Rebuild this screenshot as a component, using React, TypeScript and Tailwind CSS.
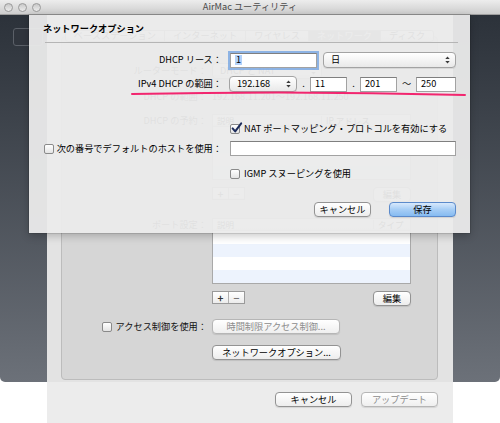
import React from "react";

function UpDown() {
  return (
    <svg width="5" height="8" viewBox="0 0 5 8" className="shrink-0">
      <path d="M2.5 0.4 L4.7 3.1 L0.3 3.1 Z" fill="#3a3a3a" />
      <path d="M2.5 7.6 L4.7 4.9 L0.3 4.9 Z" fill="#3a3a3a" />
    </svg>
  );
}

function Popup({ text, className = "" }: { text: string; className?: string }) {
  return (
    <div
      className={`flex h-[16px] shrink-0 items-center justify-between rounded-[4px] border border-[#a3a3a3] bg-gradient-to-b from-white to-[#e9e9e9] pl-[7px] pr-[5px] shadow-[0_1px_0_rgba(0,0,0,0.08)] ${className}`}
    >
      <span className="whitespace-nowrap text-[9.2px] leading-none text-black">{text}</span>
      <UpDown />
    </div>
  );
}

function Field({ children, className = "" }: { children?: React.ReactNode; className?: string }) {
  return (
    <div
      className={`flex h-[15px] shrink-0 items-center border border-[#a2a2a2] border-t-[#7f7f7f] bg-white pl-[4px] text-[9.2px] leading-none text-black ${className}`}
    >
      {children}
    </div>
  );
}

function Check({ checked = false }: { checked?: boolean }) {
  return (
    <div className="relative h-[10px] w-[10px] shrink-0 rounded-[2px] border border-[#8a8a8a] bg-gradient-to-b from-white to-[#e4e4e4]">
      {checked && (
        <svg className="absolute -top-[3px] left-[0px]" width="12" height="12" viewBox="0 0 12 12">
          <path d="M1.6 6.4 L4.2 9.4 L10.2 1.4" fill="none" stroke="#1c2b5a" strokeWidth="2" strokeLinecap="round" strokeLinejoin="round" />
        </svg>
      )}
    </div>
  );
}

function Btn({
  children,
  className = "",
  disabled = false,
  primary = false,
}: {
  children: React.ReactNode;
  className?: string;
  disabled?: boolean;
  primary?: boolean;
}) {
  const look = primary
    ? "border-[#5b8acb] bg-gradient-to-b from-[#d8e9fc] via-[#a6cdf5] to-[#86bbf1] text-black"
    : disabled
    ? "border-[#b6b6b6] bg-gradient-to-b from-white to-[#efefef] text-[#8c8c8c]"
    : "border-[#939393] bg-gradient-to-b from-white to-[#ededed] text-black";
  return (
    <div
      className={`flex h-[15px] shrink-0 items-center justify-center whitespace-nowrap rounded-[4px] border text-[9.2px] leading-none shadow-[0_1px_1px_rgba(0,0,0,0.1)] ${look} ${className}`}
    >
      {children}
    </div>
  );
}

function List({ c1, c2, split }: { c1: string; c2: string; split: string }) {
  const rows = ["bg-white", "bg-[#edf3fd]", "bg-white", "bg-[#edf3fd]"];
  return (
    <div className="ml-[5px] flex h-[66px] w-[199px] flex-col border border-[#a9a9a9] bg-white">
      <div className="flex h-[12px] items-center border-b border-[#c6c6c6] bg-gradient-to-b from-white to-[#ebebeb] text-[8.5px] leading-none text-black">
        <span className={`pl-[4px] ${split}`}>{c1}</span>
        <span className="border-l border-[#c6c6c6] pl-[4px]">{c2}</span>
      </div>
      {rows.map((r, i) => (
        <div key={i} className={`h-[13px] ${r}`} />
      ))}
    </div>
  );
}

function PlusMinus() {
  return (
    <div className="flex h-[13px] w-[33px] border border-[#9a9a9a] bg-gradient-to-b from-white to-[#ececec] text-[10px] font-bold leading-none text-[#333]">
      <div className="flex flex-1 items-center justify-center border-r border-[#b0b0b0]">+</div>
      <div className="flex flex-1 items-center justify-center text-[#777]">−</div>
    </div>
  );
}

export default function App() {
  return (
    <div className="relative h-[423px] w-[500px] overflow-hidden bg-white font-['Noto_Sans_CJK_JP','Noto_Sans',sans-serif] text-[#111]">
      {/* title bar */}
      <div className="grid h-[15px] grid-cols-[1fr_auto_1fr] items-center border-b border-[#9e9e9e] bg-gradient-to-b from-[#ededed] to-[#cdcdcd]">
        <div className="flex gap-[5px] pl-[4px]">
          {[0, 1, 2].map((i) => (
            <div key={i} className="h-[9px] w-[9px] rounded-full border border-[#9a9a9a] bg-gradient-to-b from-[#c9c9c9] to-[#ececec]" />
          ))}
        </div>
        <span className="text-[9.2px] leading-none text-[#4a4a4a]">AirMac ユーティリティ</span>
        <div />
      </div>

      <div className="flex h-[408px]">
        {/* left dark */}
        <div className="w-[47px] shrink-0">
          <div className="h-[367px] rounded-bl-[5px] bg-gradient-to-b from-[#2c323a] to-[#6c7179] pl-[13px] pt-[13px]">
            <div className="h-[18px] w-[30px] rounded-[3px] border border-[#5b6068] bg-[#30353d]" />
          </div>
        </div>

        {/* main window */}
        <div className="flex w-[406px] shrink-0 flex-col">
          <div className="h-[367px] bg-[#e3e3e3] pl-[14px] pr-[15px] pt-[21px]">
            <div className="flex h-[344px] flex-col rounded-[4px] border border-[#bcbcbc] bg-[#d6d6d6]">
              <div className="-mt-[7px] flex justify-center">
                <div className="flex h-[12px] rounded-[3px] border border-[#a0a0a0] bg-gradient-to-b from-white to-[#e4e4e4] text-[9.2px] leading-none">
                  <div className="flex items-center border-r border-[#a0a0a0] px-[8px]">ベースステーション</div>
                  <div className="flex items-center border-r border-[#a0a0a0] px-[8px]">インターネット</div>
                  <div className="flex items-center border-r border-[#a0a0a0] px-[8px]">ワイヤレス</div>
                  <div className="flex items-center border-r border-[#a0a0a0] bg-[#8a8a8a] px-[8px] text-white">ネットワーク</div>
                  <div className="flex items-center px-[8px]">ディスク</div>
                </div>
              </div>

              <div className="mt-[21px] flex h-[16px] items-center">
                <div className="w-[145px] text-right text-[9.2px] leading-none">ルーターモード：</div>
                <Popup text="DHCP と NAT" className="ml-[5px] w-[110px]" />
              </div>
              <div className="mt-[12px] flex h-[12px] items-center">
                <div className="w-[145px] text-right text-[9.2px] leading-none">DHCP の範囲：</div>
                <div className="ml-[5px] text-[9.2px] leading-none">192.168.11.201～192.168.11.250</div>
              </div>
              <div className="mt-[11px] flex">
                <div className="w-[145px] pt-[2px] text-right text-[9.2px] leading-none">DHCP の予約：</div>
                <List c1="説明" c2="IP アドレス" split="w-[108px]" />
              </div>
              <div className="ml-[150px] mt-[7px] flex w-[199px] justify-between">
                <PlusMinus />
                <Btn className="h-[13px] w-[38px]">編集</Btn>
              </div>
              <div className="mt-[16px] flex">
                <div className="w-[145px] pt-[2px] text-right text-[9.2px] leading-none">ポート設定：</div>
                <List c1="説明" c2="タイプ" split="w-[160px]" />
              </div>
              <div className="ml-[150px] mt-[7px] flex w-[199px] justify-between">
                <PlusMinus />
                <Btn className="h-[14px] w-[38px] text-[#555]">編集</Btn>
              </div>
              <div className="mt-[13px] flex h-[15px] items-center">
                <div className="flex w-[145px] items-center justify-end gap-[4px]">
                  <Check />
                  <span className="whitespace-nowrap text-[9.2px] leading-none">アクセス制御を使用：</span>
                </div>
                <Btn disabled className="ml-[5px] w-[128px]">時間制限アクセス制御...</Btn>
              </div>
              <div className="ml-[150px] mt-[11px] flex">
                <Btn className="w-[129px]">ネットワークオプション...</Btn>
              </div>
            </div>
          </div>
          <div className="flex h-[41px] justify-end gap-[9px] bg-[#ececec] pr-[15px] pt-[10px]">
            <Btn className="w-[77px]">キャンセル</Btn>
            <Btn disabled className="w-[77px]">アップデート</Btn>
          </div>
        </div>

        {/* right dark */}
        <div className="w-[47px] shrink-0">
          <div className="h-[367px] rounded-br-[5px] bg-gradient-to-b from-[#2c323a] to-[#6c7179]" />
        </div>
      </div>

      {/* sheet */}
      <div className="absolute left-[29px] top-[15px] flex h-[218px] w-[441px] flex-col bg-[#ebebeb]/[0.95] shadow-[0_0_0_1px_rgba(0,0,0,0.1),0_3px_8px_rgba(0,0,0,0.22)]">
        <div className="mt-[8px] flex h-[12px] items-center pl-[14px] text-[9.2px] font-bold leading-none text-black">
          ネットワークオプション
        </div>
        <div className="ml-[16px] mr-[12px] mt-[7px] h-[1px] bg-[#b5b5b5]" />

        <div className="mt-[9px] flex h-[16px] items-center">
          <div className="w-[193px] text-right text-[9.2px] leading-none text-black">DHCP リース：</div>
          <Field className="ml-[8px] h-[14px] w-[87px] shadow-[0_0_0_2px_rgba(110,160,225,0.75)]">
            <span className="bg-[#b3d2fa] px-[1px]">1</span>
          </Field>
          <Popup text="日" className="ml-[6px] w-[133px]" />
        </div>

        <div className="mt-[8px] flex h-[16px] items-center">
          <div className="w-[193px] text-right text-[9.2px] leading-none text-black">IPv4 DHCP の範囲：</div>
          <Popup text="192.168" className="ml-[7px] w-[68px]" />
          <div className="w-[13px] text-center text-[9.2px] leading-none">.</div>
          <Field className="w-[37px]">11</Field>
          <div className="w-[13px] text-center text-[9.2px] leading-none">.</div>
          <Field className="w-[37px]">201</Field>
          <div className="w-[19px] text-center text-[9.2px] leading-none">〜</div>
          <Field className="w-[40px]">250</Field>
        </div>

        <div className="mt-[31px] flex h-[12px] items-center pl-[201px]">
          <Check checked />
          <span className="ml-[4px] whitespace-nowrap text-[9.2px] leading-none text-black">NAT ポートマッピング・プロトコルを有効にする</span>
        </div>

        <div className="mt-[6px] flex h-[15px] items-center">
          <div className="flex w-[193px] items-center justify-end gap-[3px]">
            <Check />
            <span className="whitespace-nowrap text-[9.2px] leading-none text-black">次の番号でデフォルトのホストを使用：</span>
          </div>
          <Field className="ml-[8px] w-[226px]" />
        </div>

        <div className="mt-[12px] flex h-[12px] items-center pl-[201px]">
          <Check />
          <span className="ml-[4px] whitespace-nowrap text-[9.2px] leading-none text-black">IGMP スヌーピングを使用</span>
        </div>

        <div className="mt-[22px] flex h-[15px] items-center pl-[285px]">
          <Btn className="w-[57px]">キャンセル</Btn>
          <Btn primary className="ml-[18px] w-[67px]">保存</Btn>
        </div>
      </div>

      {/* annotation underline */}
      <svg className="pointer-events-none absolute left-0 top-0" width="500" height="423" viewBox="0 0 500 423">
        <path d="M132 94 Q 300 90.5 465 95" fill="none" stroke="#f2266f" strokeWidth="2" strokeLinecap="round" />
      </svg>
    </div>
  );
}
